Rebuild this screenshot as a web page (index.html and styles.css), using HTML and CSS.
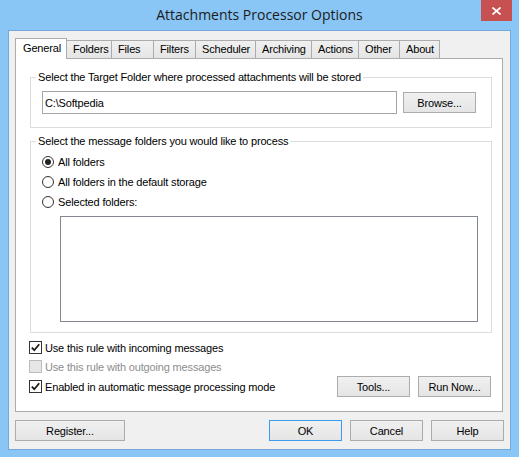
FILE: index.html
```html
<!DOCTYPE html>
<html>

<head>
    <title>Attachments Processor Options</title>
    <link rel="stylesheet" href="styles.css">
</head>

<body>
    <div class="window">
        <div class="titlebar">
            <span class="title">Attachments Processor Options</span>
            <button class="close" title="Close">
                <svg width="9" height="8" viewBox="0 0 9 8">
                    <path d="M0.5 0.5 L8.5 7.5 M8.5 0.5 L0.5 7.5" stroke="#fff" stroke-width="1.7" fill="none"/>
                </svg>
            </button>
        </div>

        <div class="client">
            <div class="tabs">
                <div class="tab active t-general">General</div>
                <div class="tab t-folders">Folders</div>
                <div class="tab t-files">Files</div>
                <div class="tab t-filters">Filters</div>
                <div class="tab t-scheduler">Scheduler</div>
                <div class="tab t-archiving">Archiving</div>
                <div class="tab t-actions">Actions</div>
                <div class="tab t-other">Other</div>
                <div class="tab t-about">About</div>
            </div>

            <div class="page">
                <fieldset class="group">
                    <legend>Select the Target Folder where processed attachments will be stored</legend>
                    <div class="target-row">
                        <input class="path" type="text" value="C:\Softpedia">
                        <button class="btn">Browse...</button>
                    </div>
                </fieldset>

                <fieldset class="group folders">
                    <legend>Select the message folders you would like to process</legend>
                    <div class="radios">
                        <label class="radio"><span class="circle checked"></span>All folders</label>
                        <label class="radio"><span class="circle"></span>All folders in the default storage</label>
                        <label class="radio"><span class="circle"></span>Selected folders:</label>
                    </div>
                    <div class="listbox"></div>
                </fieldset>

                <div class="checks">
                    <label class="check">
                        <span class="box"><svg width="11" height="11" viewBox="0 0 11 11"><path d="M1.8 5.6 L4.3 8.2 L9.2 2.2" stroke="#1b1b1b" stroke-width="1.8" fill="none"/></svg></span>
                        Use this rule with incoming messages
                    </label>
                    <label class="check disabled">
                        <span class="box"></span>
                        Use this rule with outgoing messages
                    </label>
                    <div class="last-row">
                        <label class="check">
                            <span class="box"><svg width="11" height="11" viewBox="0 0 11 11"><path d="M1.8 5.6 L4.3 8.2 L9.2 2.2" stroke="#1b1b1b" stroke-width="1.8" fill="none"/></svg></span>
                            Enabled in automatic message processing mode
                        </label>
                        <div class="page-buttons">
                            <button class="btn">Tools...</button>
                            <button class="btn">Run Now...</button>
                        </div>
                    </div>
                </div>
            </div>

            <div class="footer">
                <button class="btn register">Register...</button>
                <div class="dialog-buttons">
                    <button class="btn default">OK</button>
                    <button class="btn">Cancel</button>
                    <button class="btn">Help</button>
                </div>
            </div>
        </div>
    </div>
</body>
</html>
```

FILE: styles.css
```css
body {
    margin: 0;
    background-color: #89c5f5;
    font-family: "Liberation Sans", Arial, sans-serif;
    font-size: 11px;
    letter-spacing: -0.16px;
    color: #000;
}

.window {
    width: 519px;
    height: 457px;
}

/* title bar */
.titlebar {
    position: relative;
    height: 30px;
    line-height: 30px;
    text-align: center;
}

.title {
    font-family: "Open Sans", "Noto Sans", sans-serif;
    font-size: 14px;
    letter-spacing: normal;
    color: #1c1c1c;
}

.close {
    position: absolute;
    top: 0;
    right: 7px;
    width: 31px;
    height: 21px;
    padding: 0;
    border: none;
    background-color: #c75050;
    display: flex;
    align-items: center;
    justify-content: center;
}

/* dialog body */
.client {
    box-sizing: border-box;
    height: 420px;
    margin: 0 8px;
    padding: 7px 6px 0 6px;
    border: 1px solid #74a9da;
    background-color: #f0f0f0;
}

.tabs {
    display: flex;
    align-items: flex-end;
    height: 20px;
}

.tab {
    box-sizing: border-box;
    height: 18px;
    line-height: 16px;
    padding-left: 6px;
    margin-left: -1px;
    border: 1px solid #acacac;
    border-bottom: none;
    background: linear-gradient(#f0f0f0, #e5e5e5);
    white-space: nowrap;
}

.tab.active {
    position: relative;
    z-index: 1;
    height: 21px;
    line-height: 18px;
    margin-left: 0;
    margin-bottom: -1px;
    padding-left: 7px;
    background: #fff;
}

.t-general { width: 52px; }
.t-folders { width: 46px; }
.t-files { width: 43px; }
.t-filters { width: 43px; }
.t-scheduler { width: 61px; }
.t-archiving { width: 57px; }
.t-actions { width: 48px; }
.t-other { width: 42px; }
.t-about { width: 41px; }

.page {
    box-sizing: border-box;
    width: 488px;
    height: 354px;
    padding: 12px 10px 0 14px;
    border: 1px solid #acacac;
    background-color: #fff;
}

/* group boxes */
.group {
    margin: 0;
    padding: 0;
    border: 1px solid #dcdcdc;
}

.group legend {
    margin-left: 5px;
    padding: 0 2px;
    line-height: 13px;
}

.target-row {
    display: flex;
    align-items: center;
    padding: 7px 14px 13px 11px;
}

.path {
    box-sizing: border-box;
    width: 355px;
    height: 23px;
    margin: 0 6px 0 0;
    padding: 0 2px;
    border: 1px solid #a5a5a5;
    font-family: inherit;
    font-size: 11px;
    letter-spacing: inherit;
    color: #000;
}

.folders {
    margin-top: 7px;
}

.radios {
    padding: 4px 0 0 11px;
}

.radio {
    display: flex;
    align-items: center;
    height: 20px;
}

.circle {
    box-sizing: border-box;
    width: 12px;
    height: 12px;
    margin-right: 4px;
    border: 1px solid #333;
    border-radius: 50%;
    background-color: #fff;
    display: flex;
    align-items: center;
    justify-content: center;
}

.circle.checked::after {
    content: "";
    width: 6px;
    height: 6px;
    border-radius: 50%;
    background-color: #222;
}

.listbox {
    box-sizing: border-box;
    width: 418px;
    height: 106px;
    margin: 4px 0 10px 29px;
    border: 1px solid #828790;
    background-color: #fff;
}

/* check boxes */
.checks {
    margin: 5px 0 0 -1px;
}

.check {
    display: flex;
    align-items: center;
    height: 19px;
}

.box {
    box-sizing: border-box;
    width: 13px;
    height: 13px;
    margin-right: 3px;
    border: 1px solid #333;
    background-color: #fff;
    display: flex;
    align-items: center;
    justify-content: center;
}

.check.disabled {
    color: #8d8d8d;
}

.check.disabled .box {
    border-color: #bcbcbc;
    background-color: #e6e6e6;
}

.last-row {
    display: flex;
    align-items: center;
    justify-content: space-between;
    height: 21px;
    padding-right: 1px;
}

.last-row .check {
    height: 21px;
}

.page-buttons {
    display: flex;
    gap: 8px;
}

/* buttons */
.btn {
    box-sizing: border-box;
    width: 73px;
    height: 21px;
    padding: 0;
    border: 1px solid #acacac;
    background: linear-gradient(#f0f0f0, #e5e5e5);
    font-family: inherit;
    font-size: 11px;
    letter-spacing: inherit;
    color: #000;
}

.btn.default {
    border-color: #3c9bf0;
}

.footer {
    display: flex;
    justify-content: space-between;
    margin-top: 8px;
}

.btn.register {
    width: 110px;
}

.dialog-buttons {
    display: flex;
    gap: 8px;
}
```
